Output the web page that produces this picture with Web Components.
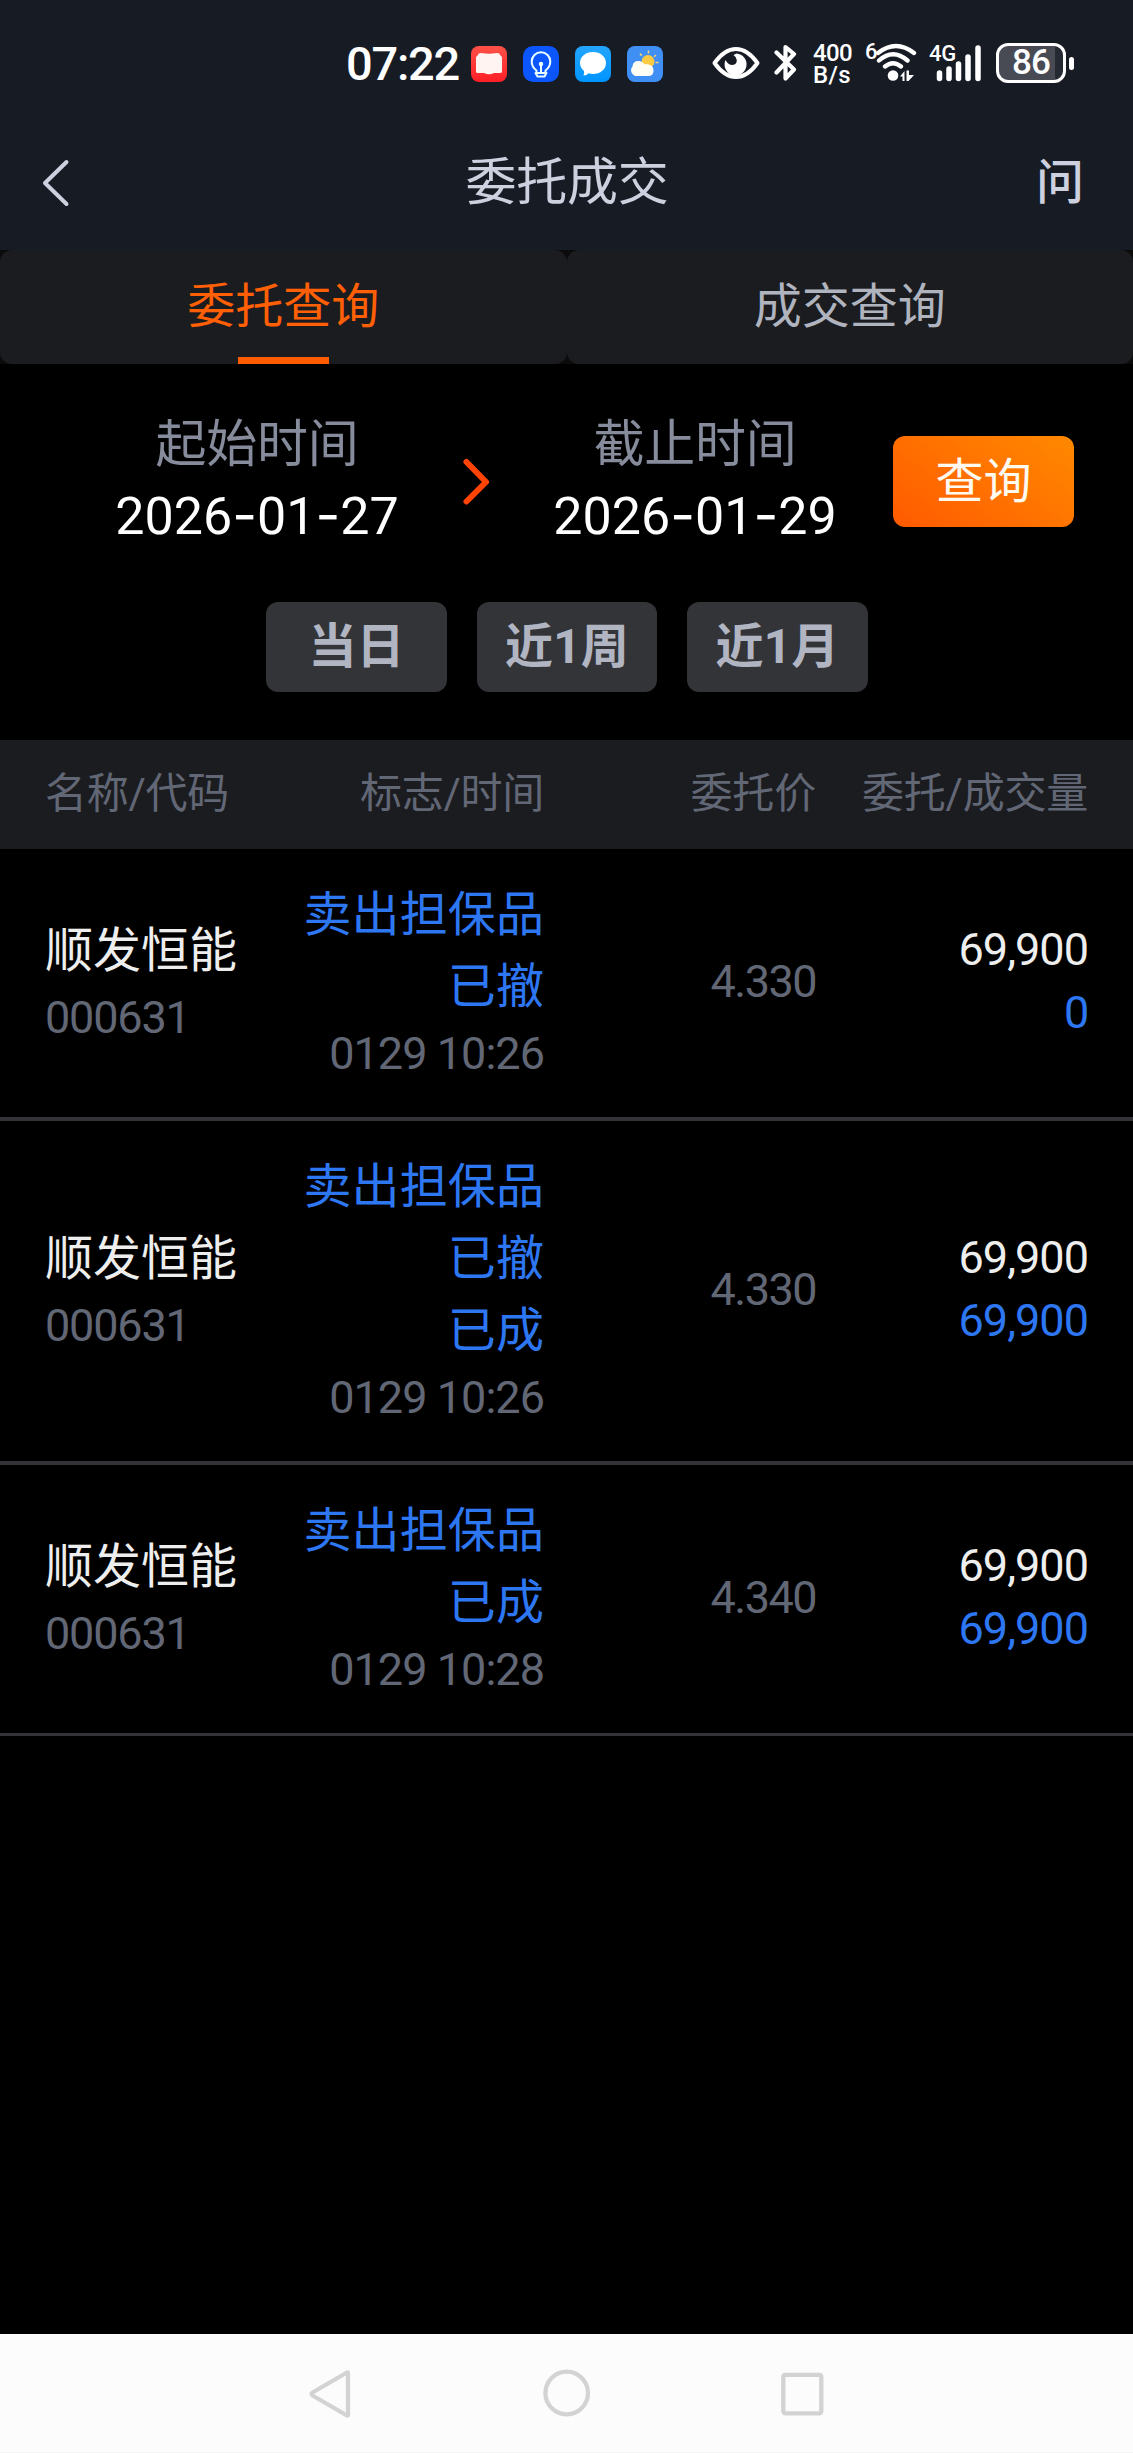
<!DOCTYPE html>
<html lang="zh-CN">
<head>
<meta charset="utf-8">
<title>委托成交</title>
<style>
html,body{margin:0;background:#000}
body{width:1133px;height:2453px;overflow:hidden;font-family:Roboto,"Noto Sans CJK SC",sans-serif}
</style>
</head>
<body>
<trade-app></trade-app>
<script>
class Base extends HTMLElement{
  constructor(){super();this.attachShadow({mode:'open'});}
  connectedCallback(){this.shadowRoot.innerHTML=this.view();}
  a(n){return this.getAttribute(n)||'';}
}

/* Text tracked to a fixed advance width, given by the w attribute. */
class FitText extends Base{
  view(){return `<style>:host{display:block;white-space:nowrap;flex:none}span{display:inline-block;white-space:pre}</style><span><slot></slot></span>`;}
  connectedCallback(){
    super.connectedCallback();
    const w=+this.a('w');
    if(!w)return;
    const s=this.shadowRoot.querySelector('span');
    const d=(w-s.getBoundingClientRect().width)/[...this.textContent].length;
    s.style.letterSpacing=d.toFixed(3)+'px';
  }
}

class StatusBar extends Base{
  view(){return `<style>
:host{display:flex;height:111px;background:#171b24;color:#fff;box-sizing:border-box;padding:43px 0 0 346px;align-items:flex-start}
svg{display:block;flex:none}
.time{font-size:47px;font-weight:500;line-height:42px;width:125px}
.apps{display:flex;gap:16px;padding-top:3px;width:241px}
.speed{width:39px;margin-left:15px;font-size:24px;font-weight:500;line-height:22px;margin-top:-1px}
.gen{font-size:22px;font-weight:500;line-height:22px}
.six{width:11px;margin-left:13px;margin-top:-2px}
.sig{display:grid;width:52px;margin-left:12px}
.sig>*{grid-area:1/1}
.batt{display:flex;width:78px;margin-left:15px;align-items:center}
.box{width:70px;height:40px;box-sizing:border-box;border:3px solid #fff;border-radius:12px;background:linear-gradient(90deg,#484b54 56px,#252932 56px);font-size:35px;font-weight:500;line-height:34px;display:flex;justify-content:center}
.nub{width:5px;height:13px;border-radius:3px;background:#fff;margin-left:3px}
</style>
<fit-text class="time" w="113">07:22</fit-text>
<div class="apps">
<svg width="36" height="36" viewBox="0 0 36 36"><defs><linearGradient id="r" x2="0" y2="1"><stop stop-color="#ff5148"/><stop offset="1" stop-color="#ff1f26"/></linearGradient></defs><rect width="36" height="36" rx="8" fill="url(#r)"/><path d="M7 9Q7 7 10 7Q15 7.800 18 7.800Q21 7.800 26 7Q29 7 29 9L31 11V26Q31 27 29 27H23Q18 29.500 13 27H7Q5 27 5 26V11Z" fill="#fff4f1"/></svg>
<svg width="36" height="36" viewBox="0 0 36 36"><rect width="36" height="36" rx="10" fill="#0c56ff"/><g fill="none" stroke="#eaffff" stroke-width="2" stroke-linecap="round" stroke-linejoin="round"><path d="M13.500 27V24.500C9.500 21.500 8.700 18.500 8.700 15.500A9.300 9.300 0 0 1 27.300 15.500C27.300 18.500 26.500 21.500 22.500 24.500V27"/><path d="M12.500 27H23.500L21.500 30.500H14.500Z"/><path d="M18 19V26"/></g><circle cx="18" cy="18" r="2.200" fill="#eaffff"/></svg>
<svg width="36" height="36" viewBox="0 0 36 36"><defs><linearGradient id="b" x2="0" y2="1"><stop stop-color="#24a6ff"/><stop offset="1" stop-color="#0094ff"/></linearGradient></defs><rect width="36" height="36" rx="8" fill="url(#b)"/><path d="M18 6C25.500 6 31 10.700 31 17S25.500 28 18 28Q15.500 28 13.500 27.300Q11.500 29.700 8.500 29.500Q9.500 27.500 9 25Q5 21.700 5 17C5 10.700 10.500 6 18 6Z" fill="#fff"/></svg>
<svg width="36" height="36" viewBox="0 0 36 36"><rect width="36" height="36" rx="8" fill="#3f8ff5"/><circle cx="21" cy="15.500" r="6.500" fill="#fccb46"/><path d="M21.500 4.500V7.500M13 7.500L14.700 9.700M29 9L27 10.800M28.500 16.500H31.500" stroke="#f6d37a" stroke-width="1.500"/><path d="M10.500 30A5.800 5.800 0 0 1 5.500 20.500Q5.800 15 11.500 15Q15.500 15 17.500 18.500Q19 17.700 21.500 18.500Q26.500 19.500 26.500 24.500Q26.500 30 21 30Z" fill="#fffef4"/></svg>
</div>
<svg width="48" height="40" viewBox="0 0 48 40"><path d="M2.500 20Q12.500 6 24 6T45.500 20Q35.500 34 24 34T2.500 20Z" fill="none" stroke="#fff" stroke-width="4" stroke-linejoin="round"/><path d="M24.500 10.500A11 11 0 1 1 13.500 17Q16 22 20.500 22Q25 21.500 24.800 17Q24.500 14 21.500 12Z" fill="#fff"/></svg>
<svg width="24" height="40" viewBox="0 0 24 40" style="margin-left:14px"><path d="M2.500 9.500L20 26.500L11.500 35.500V4L20 11L2.500 29.500" fill="none" stroke="#fff" stroke-width="4.200" stroke-linecap="round" stroke-linejoin="round"/></svg>
<div class="speed"><fit-text w="39">400</fit-text><fit-text w="38">B/s</fit-text></div>
<fit-text class="gen six" w="11">6</fit-text>
<svg width="41" height="40" viewBox="0 0 41 40"><g fill="none" stroke="#fff" stroke-width="4.300" stroke-linecap="round"><path d="M2 10Q20 -4 38 10M3 17.500Q17 5 31.500 17.500M9 23.500Q17 17 25 23.500"/></g><circle cx="17" cy="32.500" r="5.300" fill="#fff"/><path d="M24 33.500L28.500 28V38H26.500V33.500ZM30.500 27.500H33V32H38L32.500 38H30.500Z" fill="#fff"/></svg>
<div class="sig"><svg width="52" height="40" viewBox="0 0 52 40"><path d="M11 30V35.500M20.500 26V35.500M30 21V35.500M39.500 14V35.500M49.500 5V35.500" transform="translate(-.5 0)" stroke="#fff" stroke-width="5.500" stroke-linecap="round"/></svg><fit-text class="gen" w="27">4G</fit-text></div>
<div class="batt"><div class="box"><fit-text w="38">86</fit-text></div><div class="nub"></div></div>`;}
}

class TitleBar extends Base{
  view(){return `<style>
:host{display:grid;grid-template-columns:1fr auto 1fr;height:139px;background:#171b24;color:#cdd1df;align-items:center;box-sizing:border-box;padding:5px 49px 0 42px}
svg{display:block;margin-top:-1px}
.t{font-size:51px;line-height:60px;margin-left:8px}
.q{font-size:48px;font-weight:500;line-height:60px;justify-self:end}
</style><svg width="30" height="50" viewBox="0 0 30 50"><path d="M24.500 4L3 25L24.500 46" fill="none" stroke="#cdd1df" stroke-width="4" stroke-linecap="round" stroke-linejoin="round"/></svg>
<fit-text class="t" w="203">委托成交</fit-text><fit-text class="q">问</fit-text>`;}
}

class TabItem extends Base{
  view(){return `<style>
:host{flex:1;display:grid;height:114px;background:#1b1c1f;border-radius:12px;justify-items:center;grid-template-rows:107px 7px;font-size:48px;line-height:113px;color:#afb4bf}
:host([active]){color:#ff5f05}
i{display:block;width:91px;height:7px}
:host([active]) i{background:#ff5c00}
</style><fit-text w="191"><slot></slot></fit-text><i></i>`;}
}

class DateField extends Base{
  view(){return `<style>
:host{display:flex;flex-direction:column;align-items:center;width:300px;flex:none}
.l{font-size:51px;line-height:60px;color:#878c9d;padding-top:1px}
.d{font-size:52px;line-height:60px;color:#fff;margin-top:10px;display:flex;white-space:nowrap}
.d i{font:400 54px/60px Inter}
</style><fit-text class="l" w="203">${this.a('label')}</fit-text><div class="d"><span>${this.a('value').replace(/-/g,'<i>-</i>')}</span></div>`;}
}

class QueryPanel extends Base{
  view(){return `<style>
:host{display:block;height:376px;box-sizing:border-box;padding-top:50px;background:#000}
.r{display:flex;height:134px}
.s{margin-left:107px}.e{margin-left:53px}
svg{display:block;margin:43px 0 0 55px;flex:none}
.b{width:181px;height:91px;border-radius:12px;background:linear-gradient(35deg,#ff5a00,#ff8900);color:#fffaf0;font-size:48px;line-height:91px;display:flex;justify-content:center;margin:22px 0 0 48px;flex:none}
.c{display:flex;justify-content:center;gap:30px;margin-top:54px;padding-left:1px}
.c div{width:180.500px;height:90px;border-radius:12px;background:#333438;color:#b1b5c2;font-size:48px;font-weight:700;line-height:90px;display:flex;justify-content:center}
</style><div class="r"><date-field class="s" label="起始时间" value="2026-01-27"></date-field>
<svg width="30" height="50" viewBox="0 0 30 50"><path d="M4.500 5L24 25L4.500 44.500" fill="none" stroke="#ff4405" stroke-width="6" stroke-linecap="round" stroke-linejoin="round"/></svg>
<date-field class="e" label="截止时间" value="2026-01-29"></date-field>
<div class="b"><fit-text w="96">查询</fit-text></div></div>
<div class="c"><div><fit-text w="96">当日</fit-text></div><div><fit-text w="124">近1周</fit-text></div><div><fit-text w="124">近1月</fit-text></div></div>`;}
}

class TableHead extends Base{
  view(){return `<style>
:host{display:grid;grid-template-columns:199px 300px 272px 272px;height:109px;background:#1b1c20;padding:0 45px;color:#626776;font-size:42px;line-height:108px}
fit-text+fit-text{justify-self:end}
</style><fit-text w="184">名称/代码</fit-text><fit-text w="184">标志/时间</fit-text><fit-text w="125.500">委托价</fit-text><fit-text w="226">委托/成交量</fit-text>`;}
}

class OrderRow extends Base{
  view(){
    /* advance widths of the figures and their separators */
    const n=v=>[...v].reduce((s,c)=>s+(/[.,]/.test(c)?9:/:/.test(c)?10:c===' '?12:24.100),0);
    const num=(v,c)=>`<fit-text class="n ${c}" w="${n(v).toFixed(1)}">${v}</fit-text>`;
    return `<style>
:host{display:grid;grid-template-columns:199px 300px 272px 272px;padding:0 45px;align-items:center;border-bottom:4px solid #333437;color:#626776}
:host(:last-of-type){border-bottom-width:3px}
div{display:flex;flex-direction:column;align-items:flex-end}
.a{align-items:flex-start;padding-bottom:5px}
.a .z{color:#eee;line-height:73px}
.a .n{line-height:61px}
.z{font-size:48px;line-height:72px}
.m{padding:30px 0 33px}
.m .z,.blue{color:#2e77f2}
.n{font-size:45px;line-height:60px}
.m .n{line-height:61px}
.p{padding-bottom:3px}
.v{padding-bottom:4px}.v .n{line-height:63px}
.n.w{color:#eee}
</style><div class="a"><fit-text class="z" w="192">${this.a('name')}</fit-text>${num(this.a('code'),'')}</div>
<div class="m">${this.a('flags').split(' ').map(f=>`<fit-text class="z" w="${f.length*48.1}">${f}</fit-text>`).join('')}${num(this.a('time'),'')}</div>
<div class="p">${num(this.a('price'),'')}</div>
<div class="v">${num(this.a('qty'),'w')}${num(this.a('done'),'blue')}</div>`;}
}

class NavBar extends Base{
  view(){return `<style>
:host{display:flex;justify-content:space-between;height:119px;box-sizing:border-box;padding:35px 307px 0;background:#fcfcfc;border-bottom:1px solid #f4f4f4}
svg{display:block}
g{fill:none;stroke:#d3d3d3;stroke-width:4.300;stroke-linejoin:round}
</style><svg width="48" height="50" viewBox="0 0 48 50"><g><path d="M40 3.500Q41 3 41 4.500V45.500Q41 47 40 46.500L5.500 26.500Q4 25 5.500 23.500Z"/></g></svg>
<svg width="50" height="50" viewBox="0 0 50 50"><g><circle cx="24.700" cy="24" r="21.300"/></g></svg>
<svg width="48" height="50" viewBox="0 0 48 50"><g><rect x="5.300" y="5.800" width="38" height="38.500" rx="2"/></g></svg>`;}
}

class TradeApp extends Base{
  view(){return `<style>
:host{display:flex;flex-direction:column;width:1133px;height:2453px;background:#000}
.tabs{display:flex;background:#0b0b0c}
main{flex:1}
</style><status-bar></status-bar><title-bar></title-bar>
<div class="tabs"><tab-item active>委托查询</tab-item><tab-item>成交查询</tab-item></div>
<query-panel></query-panel><table-head></table-head>
<main>
<order-row name="顺发恒能" code="000631" flags="卖出担保品 已撤" time="0129 10:26" price="4.330" qty="69,900" done="0"></order-row>
<order-row name="顺发恒能" code="000631" flags="卖出担保品 已撤 已成" time="0129 10:26" price="4.330" qty="69,900" done="69,900"></order-row>
<order-row name="顺发恒能" code="000631" flags="卖出担保品 已成" time="0129 10:28" price="4.340" qty="69,900" done="69,900"></order-row>
</main><nav-bar></nav-bar>`;}
}

for(const [n,c] of Object.entries({'fit-text':FitText,'status-bar':StatusBar,'title-bar':TitleBar,'tab-item':TabItem,'date-field':DateField,'query-panel':QueryPanel,'table-head':TableHead,'order-row':OrderRow,'nav-bar':NavBar,'trade-app':TradeApp}))customElements.define(n,c);
</script>
</body>
</html>
